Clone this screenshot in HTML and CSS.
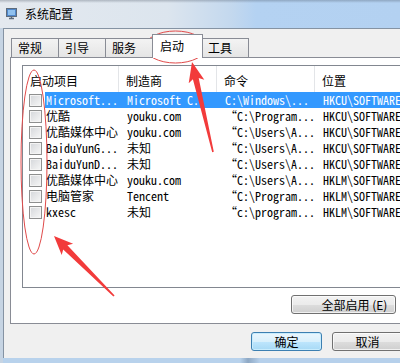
FILE: index.html
```html
<!DOCTYPE html>
<html lang="zh-CN">

<head>
    <meta charset="UTF-8">
    <meta name="viewport" content="width=device-width, initial-scale=1.0">
    <title>系统配置</title>
    <link rel="stylesheet" href="styles.css">
</head>

<body>
    <div class="window">
        <header class="titlebar">
            <svg class="title-icon" width="13" height="14" viewBox="0 0 13 14">
                <rect x="1.5" y="1.5" width="10" height="8" fill="#4f86c9" stroke="#5d6b7c"/>
                <rect x="3" y="3" width="7" height="5" fill="#8fc0ee"/>
                <path d="M4 11.5h5M6.5 10v1.5" stroke="#5d6b7c" stroke-width="1.4"/>
            </svg>
            <span class="title-text">系统配置</span>
        </header>

        <div class="frame">
            <div class="dialog">
                <nav class="tabs">
                    <div class="tab">常规</div>
                    <div class="tab">引导</div>
                    <div class="tab">服务</div>
                    <div class="tab active">启动</div>
                    <div class="tab">工具</div>
                </nav>

                <section class="panel">
                    <div class="listview">
                        <div class="lv-head">
                            <div class="lv-col first">启动项目</div>
                            <div class="lv-col">制造商</div>
                            <div class="lv-col">命令</div>
                            <div class="lv-col">位置</div>
                        </div>
                        <div id="rows"></div>
                    </div>
                    <div class="panel-actions">
                        <button class="btn wide">全部启用 (E)</button>
                    </div>
                </section>

                <div class="dialog-actions">
                    <button class="btn default">确定</button>
                    <button class="btn">取消</button>
                </div>
            </div>
        </div>

        <svg class="marks" width="400" height="363" viewBox="0 0 400 363">
            <ellipse cx="175.5" cy="47" rx="30.5" ry="16" fill="none" stroke="#e04a4a" stroke-width="1"/>
            <ellipse cx="34" cy="162" rx="13" ry="92" fill="none" stroke="#e04a4a" stroke-width="1"/>
            <polygon fill="#f23b3b" points="192,62 204.3,79.7 198.7,77.9 213.8,151.8 212.2,152.2 192.9,79.3 188.7,83.3"/>
            <polygon fill="#f23b3b" points="54,236 73.1,243.7 67.4,245.2 114.6,295.4 113.4,296.6 63.2,249.4 61.7,255.1"/>
        </svg>
    </div>

    <script>
        const items = [
            { name: 'Microsoft...', maker: 'Microsoft C.', cmd: 'C:\\Windows\\...', place: 'HKCU\\SOFTWARE', selected: true },
            { name: '优酷', maker: 'youku.com', cmd: '“C:\\Program...', place: 'HKCU\\SOFTWARE' },
            { name: '优酷媒体中心', maker: 'youku.com', cmd: '“C:\\Users\\A...', place: 'HKCU\\SOFTWARE' },
            { name: 'BaiduYunG...', maker: '未知', cmd: '“C:\\Users\\A...', place: 'HKCU\\SOFTWARE' },
            { name: 'BaiduYunD...', maker: '未知', cmd: '“C:\\Users\\A...', place: 'HKCU\\SOFTWARE' },
            { name: '优酷媒体中心', maker: 'youku.com', cmd: '“C:\\Users\\A...', place: 'HKLM\\SOFTWARE' },
            { name: '电脑管家', maker: 'Tencent', cmd: '“C:\\Program...', place: 'HKLM\\SOFTWARE' },
            { name: 'kxesc', maker: '未知', cmd: '“c:\\program...', place: 'HKLM\\SOFTWARE' }
        ];

        document.getElementById('rows').innerHTML = items.map(item => `
            <div class="lv-row${item.selected ? ' selected' : ''}">
                <div class="lv-check"><span class="checkbox"></span></div>
                <div class="lv-cell name">${item.name}</div>
                <div class="lv-cell">${item.maker}</div>
                <div class="lv-cell">${item.cmd}</div>
                <div class="lv-cell">${item.place}</div>
            </div>
        `).join('');
    </script>
</body>

</html>
```

FILE: styles.css
```css
* {
    margin: 0;
    padding: 0;
    box-sizing: border-box;
}

body {
    font-family: "Noto Sans CJK SC", "Liberation Sans", sans-serif;
    font-size: 12px;
    color: #000;
    background: #b9d3ec;
}

.window {
    position: relative;
    width: 400px;
    height: 363px;
    overflow: hidden;
}

.titlebar {
    height: 28px;
    display: flex;
    align-items: center;
    gap: 7px;
    padding-left: 5px;
    background:
        linear-gradient(to bottom, rgba(60, 70, 85, 0.3) 0, rgba(60, 70, 85, 0) 3px),
        linear-gradient(to right, #e4e9ef 0%, #dce5ee 42%, #c3d8ee 58%, #b4d2f2 64%, #b3d1f1 100%);
}

.title-text {
    line-height: 14px;
}

.frame {
    height: 335px;
    padding: 0 0 5px 3px;
    background: linear-gradient(to right, #c6d4e3 0, #c6d4e3 3px, #b8d2ec 3px, #b8d2ec 60%, #8ea8c4 62%, #b6d0eb 65%);
}

.dialog {
    width: 430px;
    height: 330px;
    padding: 9px 0 0 6px;
    background: #f0f0f0;
    border-top: 1px solid #8593a3;
    border-left: 1px solid #8593a3;
}

.tabs {
    display: flex;
    align-items: flex-end;
    height: 19px;
    padding-left: 1px;
    position: relative;
    z-index: 1;
}

.tab {
    height: 19px;
    padding: 0 16px 0 6px;
    line-height: 18px;
    border: 1px solid #898c95;
    border-bottom: none;
    background: linear-gradient(to bottom, #f3f3f3, #e5e5e5);
}

.tab + .tab {
    margin-left: -1px;
}

.tab.active {
    height: 24px;
    margin: 0 -2px -1px -1px;
    padding: 0 18px 0 7px;
    line-height: 21px;
    background: #fff;
    position: relative;
    z-index: 2;
}

.tab.active + .tab {
    margin-left: 0;
}

.panel {
    width: 411px;
    height: 267px;
    padding: 7px 11px 0 11px;
    background: #fff;
    border: 1px solid #898c95;
}

.listview {
    height: 223px;
    border: 1px solid #828790;
    overflow: hidden;
}

.lv-head {
    display: grid;
    grid-template-columns: 96px 98px 98px 1fr;
    height: 26px;
}

.lv-col {
    padding: 7px 0 0 7px;
    line-height: 16px;
    border-right: 1px solid #e3e5e8;
    white-space: nowrap;
}

.lv-col:last-child {
    border-right: none;
}

.lv-row {
    display: grid;
    grid-template-columns: 22px 74px 98px 98px 1fr;
    height: 16px;
    line-height: 16px;
    font-family: "Noto Sans Mono CJK SC", "Liberation Mono", monospace;
}

.lv-check {
    display: flex;
    align-items: center;
    padding-left: 6px;
}

.checkbox {
    width: 13px;
    height: 13px;
    border: 1px solid #8e8f8f;
    background: linear-gradient(135deg, #d4d6da, #f7f7f7);
    box-shadow: inset 0 0 0 1px #f4f4f4;
}

.lv-cell {
    padding-left: 8px;
    white-space: nowrap;
    overflow: hidden;
}

.lv-cell.name {
    padding-left: 1px;
}

.lv-row.selected .lv-cell {
    background: #3399ff;
    color: #fff;
}

.panel-actions {
    display: flex;
    justify-content: flex-end;
    margin-top: 7px;
    padding-right: 13px;
}

.btn {
    height: 19px;
    width: 71px;
    font-family: inherit;
    font-size: 12px;
    line-height: 17px;
    color: #000;
    border: 1px solid #707070;
    border-radius: 3px;
    background: linear-gradient(to bottom, #f2f2f2 0%, #ebebeb 50%, #dddddd 51%, #cfcfcf 100%);
    box-shadow: inset 0 0 0 1px rgba(255, 255, 255, 0.7);
}

.btn.wide {
    width: 105px;
    padding-left: 22px;
}

.btn.default {
    border-color: #3c7fb1;
    background: linear-gradient(to bottom, #eaf6fd 0%, #d9f0fc 50%, #bee6fd 51%, #a7d9f5 100%);
    box-shadow: inset 0 0 0 1px #c8ecfd;
}

.dialog-actions {
    display: flex;
    gap: 10px;
    margin-top: 8px;
    padding-left: 241px;
}

.marks {
    position: absolute;
    top: 0;
    left: 0;
    pointer-events: none;
}
```
